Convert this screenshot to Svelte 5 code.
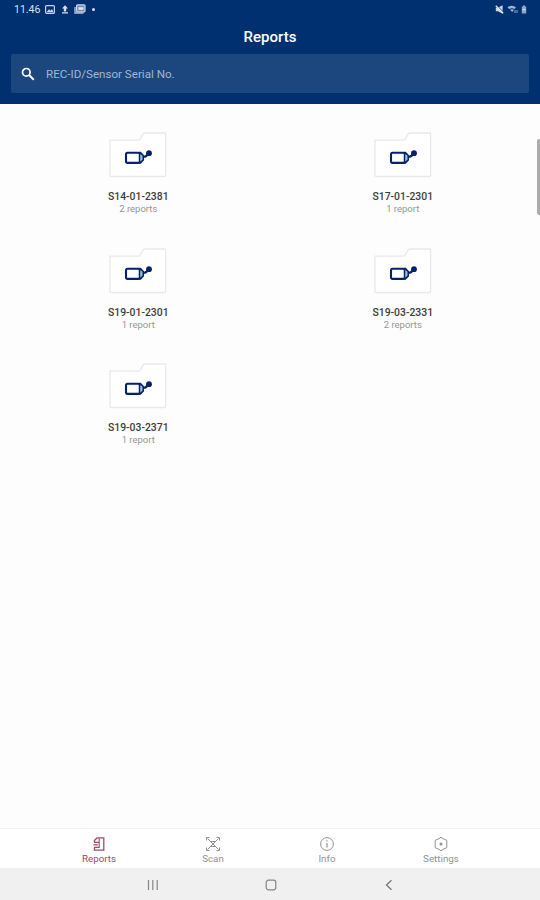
<script>
  let search = '';
  let activeTab = 'Reports';

  const folders = [
    { serial: 'S14-01-2381', reports: 2 },
    { serial: 'S17-01-2301', reports: 1 },
    { serial: 'S19-01-2301', reports: 1 },
    { serial: 'S19-03-2331', reports: 2 },
    { serial: 'S19-03-2371', reports: 1 },
  ];

  const tabs = ['Reports', 'Scan', 'Info', 'Settings'];
</script>

<div class="screen">
  <header>
    <div class="status">
      <div class="status-left">
        <span class="time">11.46</span>
        <svg class="picture" width="10" height="9" viewBox="0 0 10 9">
          <rect x="0.6" y="0.6" width="8.8" height="7.8" rx="1" fill="none" stroke="#c9d6e8" stroke-width="1.2" />
          <path d="M1.5 7.2 4 4.2l1.5 1.5L7 4l1.6 3.2z" fill="#c9d6e8" />
        </svg>
        <svg class="upload" width="8" height="9" viewBox="0 0 8 9">
          <path d="M4 0.3 7 3.6H5.2V6.5H2.8V3.6H1z M1 7.3h6v1.2H1z" fill="#d5e0ee" />
        </svg>
        <svg class="gallery" width="12" height="10" viewBox="0 0 12 10">
          <path d="M1 3v6h8.5" fill="none" stroke="#aebfd8" stroke-width="1.4" />
          <rect x="2.6" y="0.8" width="8.4" height="7" rx="1" fill="#6d8ab2" stroke="#c9d6e8" stroke-width="1.2" />
          <path d="M4.5 3.2h5v2.6h-5z" fill="#e2e9f3" />
        </svg>
        <span class="dot"></span>
      </div>
      <div class="status-right">
        <svg width="9" height="9" viewBox="0 0 9 9">
          <path d="M0.8 2.8h2L7.6 0.3v8.4L3 6.2H0.8z" fill="#c9d6e8" />
          <path d="M1.6 0.2l7 7.2" stroke="#003070" stroke-width="1" />
          <path d="M0.8 0.7l7.4 7.6" stroke="#dde6f1" stroke-width="1.3" />
        </svg>
        <svg width="11" height="9" viewBox="0 0 11 9">
          <path d="M0.5 2.2q4.5-3 8.5 0L7.5 4Q5 2.4 2.2 4zM3 4.7q2-1 4 0L5.2 7z" fill="#9fb4d0" />
          <path d="M8 5v3M10 5v3" stroke="#9fb4d0" stroke-width="0.9" />
        </svg>
        <svg width="6" height="9" viewBox="0 0 6 9">
          <path d="M2 0.5h2v1h1.2v7H0.8v-7H2z" fill="#8fa7c6" />
          <path d="M1.5 4.6h3" stroke="#d2ddeb" stroke-width="1.2" />
        </svg>
      </div>
    </div>
    <h1>Reports</h1>
    <label class="search">
      <svg width="14" height="14" viewBox="0 0 14 14">
        <circle cx="5.3" cy="5.3" r="3.8" fill="none" stroke="#fff" stroke-width="1.7" />
        <path d="M8 8l4.8 4.8" stroke="#fff" stroke-width="2" />
      </svg>
      <input type="text" placeholder="REC-ID/Sensor Serial No." bind:value={search} />
    </label>
  </header>

  <main>
    {#each folders as folder}
      <div class="folder">
        <svg width="58" height="46" viewBox="0 0 58 46">
          <path
            d="M1 8.2H28.5Q30.5 8.2 31.4 6.8L34 2.2Q34.8 1 36.6 1H55.5Q56.6 1 56.6 2.1V43.4Q56.6 44.5 55.5 44.5H2.1Q1 44.5 1 43.4Z"
            fill="#fff"
            stroke="#e9e9eb"
            stroke-width="1.3"
          />
          <rect x="17" y="20.7" width="13.8" height="10.2" rx="1.6" fill="#fff" stroke="#06216b" stroke-width="2.1" />
          <path d="M31.2 22.4h1.6v6.8h-1.6z" fill="#7fb4d6" />
          <path d="M30 20.6h1.4l2.8 2.9v4.4L31.4 31H30" fill="none" stroke="#06216b" stroke-width="1.7" />
          <path d="M34 25l2.6-.6 3-2.6" fill="none" stroke="#06216b" stroke-width="2.3" />
          <circle cx="40" cy="21.2" r="2.9" fill="#06216b" />
        </svg>
        <span class="serial">{folder.serial}</span>
        <span class="count">{folder.reports} {folder.reports === 1 ? 'report' : 'reports'}</span>
      </div>
    {/each}
    <div class="scrollbar"></div>
  </main>

  <nav class="tabs">
    {#each tabs as tab}
      <button class:active={activeTab === tab} on:click={() => (activeTab = tab)}>
        <svg width="16" height="16" viewBox="0 0 16 16" fill="none" stroke="currentColor">
          {#if tab === 'Reports'}
            <path d="M6.2 1.8h6.6v12.4H3.4V11.6M3.4 6V4.6l2.8-2.8" stroke-width="1.3" />
            <path d="M3 6.4h5.2V2M2.4 8.9h4.4M3 11.4h5.2V6.4" stroke-width="1.1" />
          {:else if tab === 'Scan'}
            <path d="M1.5 4.5v-3h3M11.5 1.5h3v3M14.5 11.5v3h-3M4.5 14.5h-3v-3" />
            <path d="M2.5 2.5l11 11M13.5 2.5l-11 11M5 5.5h6M5 10.5h6" />
          {:else if tab === 'Info'}
            <circle cx="8" cy="8" r="6.4" />
            <path d="M8 7v4.5M8 4.3v1.3" stroke-width="1.2" />
          {:else}
            <path d="M8 1.2l2 1.5 3.8 1.6v7.4L10 13.3l-2 1.5-2-1.5-3.8-1.6V4.3L6 2.7z" />
            <circle cx="8" cy="8" r="1.5" fill="currentColor" stroke="none" />
          {/if}
        </svg>
        <span>{tab}</span>
      </button>
    {/each}
  </nav>

  <div class="system-bar">
    <svg width="12" height="12" viewBox="0 0 12 12" fill="none" stroke="#858585" stroke-width="1.2">
      <path d="M1.5 1v10M5.8 1v10M10.2 1v10" />
    </svg>
    <svg width="12" height="12" viewBox="0 0 12 12" fill="none" stroke="#858585" stroke-width="1.2">
      <rect x="1.2" y="1.2" width="9.6" height="9.6" rx="2.2" />
    </svg>
    <svg width="12" height="12" viewBox="0 0 12 12" fill="none" stroke="#777" stroke-width="1.3">
      <path d="M8.5 1.2L3.5 6l5 4.8" />
    </svg>
  </div>
</div>

<style>
  :global(body) {
    margin: 0;
  }

  .screen {
    display: flex;
    flex-direction: column;
    height: 900px;
    background: #fdfdfd;
    font-family: Roboto, sans-serif;
  }

  header {
    box-sizing: border-box;
    height: 104px;
    padding: 0 11px;
    background: #003070;
    color: #fff;
  }

  .status {
    display: flex;
    justify-content: space-between;
    height: 18px;
    padding: 0 2px 0 3px;
  }

  .status-left,
  .status-right {
    display: flex;
    align-items: center;
  }

  .time {
    width: 31px;
    padding-top: 1px;
    font-size: 10.5px;
    line-height: 18px;
    color: #d5e0ee;
  }

  .upload {
    margin-left: 6px;
  }

  .gallery {
    margin-left: 5px;
  }

  .dot {
    width: 3px;
    height: 3px;
    margin-left: 6px;
    border-radius: 50%;
    background: #d5e0ee;
  }

  .status-right {
    gap: 3px;
  }

  h1 {
    box-sizing: border-box;
    height: 36px;
    margin: 0;
    padding-top: 2px;
    font-size: 15px;
    font-weight: 500;
    line-height: 34px;
    text-align: center;
  }

  .search {
    display: flex;
    align-items: center;
    height: 39px;
    padding-left: 10px;
    border-radius: 2px;
    background: #1b477e;
  }

  input {
    flex: 1;
    margin-left: 11px;
    padding: 1px 0 0;
    border: 0;
    outline: 0;
    background: none;
    color: #fff;
    font: 11.6px Roboto, sans-serif;
  }

  input::placeholder {
    color: #a3b7d0;
    opacity: 1;
  }

  main {
    position: relative;
    flex: 1;
    display: grid;
    grid-template-columns: 1fr 1fr;
    grid-auto-rows: 115.5px;
    align-content: start;
    padding: 28px 5px 0 6px;
  }

  .folder {
    display: flex;
    flex-direction: column;
    align-items: center;
  }

  .serial {
    margin-top: 11px;
    font-size: 10.4px;
    font-weight: 500;
    line-height: 15px;
    color: #3c3c3c;
  }

  .count {
    font-size: 9.5px;
    line-height: 10px;
    color: #969696;
  }

  .scrollbar {
    position: absolute;
    top: 35px;
    right: 0;
    width: 3px;
    height: 76px;
    border-radius: 2px 0 0 2px;
    background: #ababab;
  }

  .tabs {
    display: flex;
    box-sizing: border-box;
    height: 40px;
    padding: 0 42px;
    border-top: 1px solid #f0f0f0;
    background: #fff;
  }

  button {
    flex: 1;
    display: flex;
    flex-direction: column;
    align-items: center;
    padding: 7px 0 0;
    border: 0;
    background: none;
    color: #929292;
    font: 9.8px/13px Roboto, sans-serif;
  }

  button.active {
    color: #a3486a;
  }

  .system-bar {
    display: flex;
    box-sizing: border-box;
    align-items: center;
    justify-content: center;
    gap: 106px;
    height: 32px;
    padding: 2px 0 0 2px;
    background: #f0f0f0;
  }
</style>
